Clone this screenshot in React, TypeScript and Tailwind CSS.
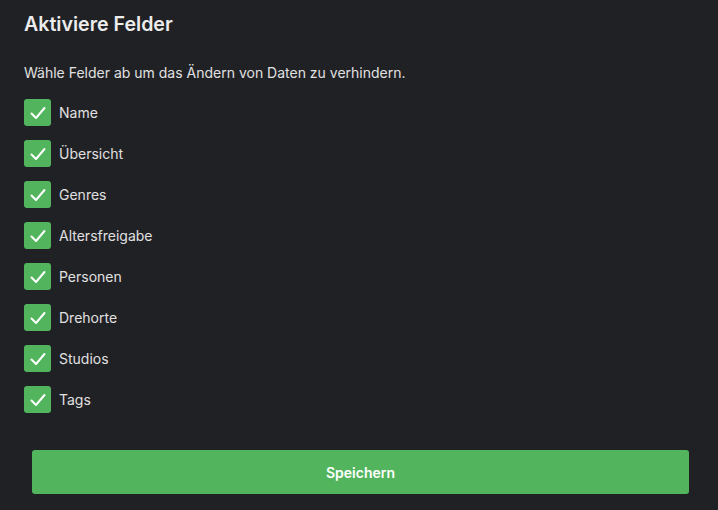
import React from "react";

const fields = ["Name", "Übersicht", "Genres", "Altersfreigabe", "Personen", "Drehorte", "Studios", "Tags"];

function Check() {
  return (
    <div className="w-[27px] h-[27px] rounded-[3px] bg-[#52b55e] flex items-center justify-center shrink-0">
      <svg width="18" height="18" viewBox="0 0 18 18" fill="none">
        <path d="M2.5 9.5 L7 14 L15.5 4" stroke="#ffffff" strokeWidth="2" strokeLinecap="round" strokeLinejoin="round" />
      </svg>
    </div>
  );
}

export default function App() {
  return (
    <div className="w-[718px] h-[510px] bg-[#202125] text-[#e6e6e6] overflow-hidden" style={{ fontFamily: "Inter, 'Noto Sans', sans-serif" }}>
      <div className="pl-6 pt-[11px]">
        <h1 className="text-[19.6px] font-semibold leading-[26px] text-[#ececec]">Aktiviere Felder</h1>
        <p className="mt-[26px] text-[14px] leading-[20px] text-[#e0e0e0]">Wähle Felder ab um das Ändern von Daten zu verhindern.</p>
        <div className="mt-[16px] flex flex-col gap-[14px]">
          {fields.map((f) => (
            <div key={f} className="flex items-center gap-[8px]">
              <Check />
              <span className="text-[14px] leading-[20px] text-[#e0e0e0]">{f}</span>
            </div>
          ))}
        </div>
      </div>
      <div className="px-[32px] pr-[29px] mt-[37px]">
        <button className="w-full h-[44px] rounded-[3px] bg-[#52b55e] text-white text-[14px] font-semibold">Speichern</button>
      </div>
    </div>
  );
}
